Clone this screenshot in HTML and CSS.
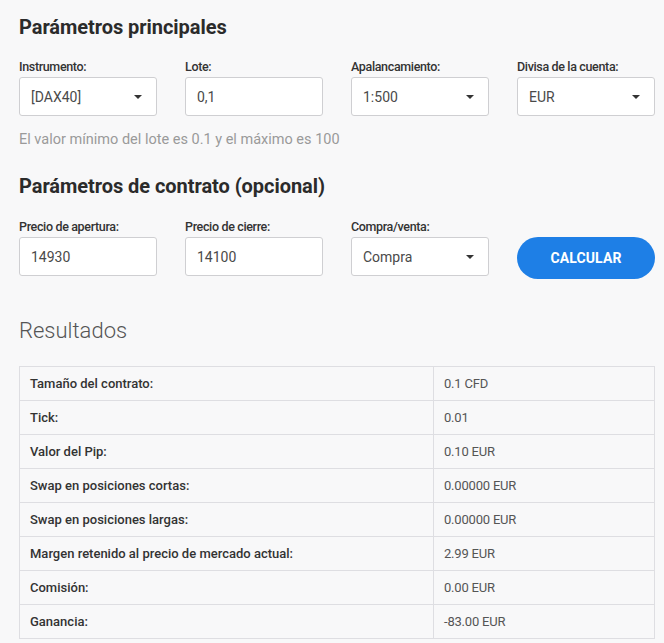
FILE: index.html
```html
<!DOCTYPE html>
<html lang="es">
<head>
<meta charset="utf-8">
<link rel="stylesheet" href="styles.css">
</head>
<body>
<div class="page">
  <h2 class="section-title">Parámetros principales</h2>
  <div class="grid">
    <div class="field">
      <label class="label">Instrumento:</label>
      <div class="control select"><span>[DAX40]</span><span class="caret"></span></div>
    </div>
    <div class="field">
      <label class="label">Lote:</label>
      <div class="control"><span>0,1</span></div>
    </div>
    <div class="field">
      <label class="label">Apalancamiento:</label>
      <div class="control select"><span>1:500</span><span class="caret"></span></div>
    </div>
    <div class="field">
      <label class="label">Divisa de la cuenta:</label>
      <div class="control select"><span>EUR</span><span class="caret"></span></div>
    </div>
  </div>
  <p class="hint">El valor mínimo del lote es 0.1 y el máximo es 100</p>

  <h2 class="section-title second">Parámetros de contrato (opcional)</h2>
  <div class="grid grid-second">
    <div class="field">
      <label class="label">Precio de apertura:</label>
      <div class="control"><span>14930</span></div>
    </div>
    <div class="field">
      <label class="label">Precio de cierre:</label>
      <div class="control"><span>14100</span></div>
    </div>
    <div class="field">
      <label class="label">Compra/venta:</label>
      <div class="control select"><span>Compra</span><span class="caret"></span></div>
    </div>
    <div class="field button-field">
      <button class="btn">CALCULAR</button>
    </div>
  </div>

  <h2 class="results-title">Resultados</h2>
  <table class="results">
    <tr><th>Tamaño del contrato:</th><td>0.1 CFD</td></tr>
    <tr><th>Tick:</th><td>0.01</td></tr>
    <tr><th>Valor del Pip:</th><td>0.10 EUR</td></tr>
    <tr><th>Swap en posiciones cortas:</th><td>0.00000 EUR</td></tr>
    <tr><th>Swap en posiciones largas:</th><td>0.00000 EUR</td></tr>
    <tr><th>Margen retenido al precio de mercado actual:</th><td>2.99 EUR</td></tr>
    <tr><th>Comisión:</th><td>0.00 EUR</td></tr>
    <tr><th>Ganancia:</th><td>-83.00 EUR</td></tr>
  </table>
</div>
</body>
</html>
```
FILE: styles.css
```css
* { box-sizing: border-box; }
html, body {
  margin: 0;
  padding: 0;
  background: #f8f8f9;
  font-family: Roboto, "Liberation Sans", Arial, sans-serif;
  color: #333;
}
.page {
  width: 664px;
  padding: 14px 9px 0 19px;
}
.section-title {
  margin: 0;
  font-size: 20px;
  line-height: 26px;
  font-weight: 700;
  color: #2b2b2b;
  letter-spacing: -0.05px;
}
.section-title.second {
  margin-top: 23px;
}
.grid {
  display: grid;
  grid-template-columns: repeat(4, 1fr);
  column-gap: 28px;
  margin-top: 19px;
}
.grid.grid-second {
  margin-top: 20px;
}
.field {
  display: flex;
  flex-direction: column;
}
.label {
  font-size: 12.5px;
  line-height: 15px;
  font-weight: 500;
  color: #333;
  letter-spacing: -0.35px;
  margin-bottom: 3px;
}
.control {
  height: 39px;
  background: #fff;
  border: 1px solid #cfcfd2;
  border-radius: 3px;
  display: flex;
  align-items: center;
  justify-content: space-between;
  padding: 0 12px 0 11px;
  font-size: 14px;
  color: #4a4a4a;
}
.caret {
  width: 0;
  height: 0;
  border-left: 4px solid transparent;
  border-right: 4px solid transparent;
  border-top: 4px solid #333;
  margin-right: 2px;
}
.hint {
  margin: 14px 0 0;
  font-size: 14.5px;
  line-height: 20px;
  color: #9a9a9a;
}
.button-field {
  justify-content: flex-end;
}
.btn {
  height: 42px;
  margin-bottom: -3px;
  border: none;
  border-radius: 21px;
  background: #1e7fe6;
  color: #fff;
  font-family: Roboto, "Liberation Sans", Arial, sans-serif;
  font-size: 14px;
  font-weight: 700;
  letter-spacing: 0.1px;
}
.results-title {
  margin: 41px 0 0;
  font-size: 22px;
  line-height: 28px;
  font-weight: 300;
  color: #555;
}
.results {
  margin-top: 21px;
  width: 636px;
  border-collapse: collapse;
  font-size: 13px;
}
.results th, .results td {
  height: 34px;
  border: 1px solid #dedee2;
  padding: 0 10px;
  text-align: left;
  vertical-align: middle;
}
.results th {
  width: 414px;
  font-weight: 500;
  color: #333;
  letter-spacing: 0;
}
.results td {
  font-weight: 400;
  color: #555;
  letter-spacing: -0.2px;
}
```
